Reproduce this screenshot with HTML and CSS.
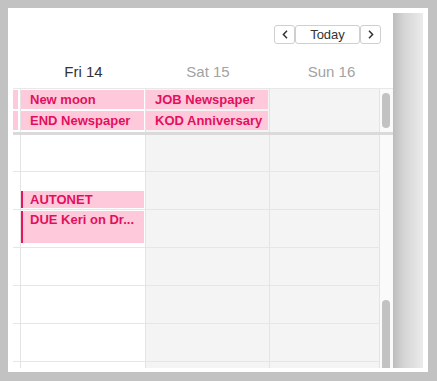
FILE: index.html
```html
<!DOCTYPE html>
<html lang="en">
<head>
  <meta charset="UTF-8" />
  <meta name="viewport" content="width=device-width, initial-scale=1.0"/>
  <title>Week view</title>
  <link rel="stylesheet" href="styles.css">
</head>
<body>

  <div class="window">
    <div class="cal">

      <div class="toolbar">
        <button class="nav-btn" aria-label="Previous">
          <svg width="6" height="9" viewBox="0 0 6 9"><path d="M5 0.8 L1.4 4.5 L5 8.2" fill="none" stroke="#333" stroke-width="1.5"/></svg>
        </button>
        <button class="today-btn">Today</button>
        <button class="nav-btn" aria-label="Next">
          <svg width="6" height="9" viewBox="0 0 6 9"><path d="M1 0.8 L4.6 4.5 L1 8.2" fill="none" stroke="#333" stroke-width="1.5"/></svg>
        </button>
      </div>

      <div class="day-heads">
        <div></div>
        <div class="day-head current">Fri 14</div>
        <div class="day-head">Sat 15</div>
        <div class="day-head">Sun 16</div>
      </div>

      <div class="allday">
        <div class="cell gutter">
          <div class="stub"></div>
          <div class="stub"></div>
        </div>
        <div class="cell">
          <div class="event">New moon</div>
          <div class="event">END Newspaper</div>
        </div>
        <div class="cell weekend">
          <div class="event">JOB Newspaper</div>
          <div class="event">KOD Anniversary</div>
        </div>
        <div class="cell weekend"></div>
        <div class="scroll">
          <div class="thumb thumb-top"></div>
        </div>
      </div>

      <div class="timegrid">
        <div class="col gutter"></div>
        <div class="col">
          <div class="timed" style="top:56px;height:17px">AUTONET</div>
          <div class="timed" style="top:76px;height:32px">DUE Keri on Dr...</div>
        </div>
        <div class="col weekend"></div>
        <div class="col weekend"></div>
        <div class="scroll">
          <div class="thumb thumb-bottom"></div>
        </div>
      </div>

    </div>
    <div class="shade"></div>
  </div>

</body>
</html>
```

FILE: styles.css
```css
body {
  margin: 0;
  padding: 8px 9px 9px 8px;
  background: #c2c2c2;
  font-family: "Liberation Sans", Arial, sans-serif;
}

.window {
  display: flex;
  height: 364px;
  padding: 0 5px 4px 5px;
  box-sizing: border-box;
  background: #fff;
}

.cal {
  flex: 1;
  display: flex;
  flex-direction: column;
  padding-top: 17px;
  overflow: hidden;
}

.shade {
  width: 30px;
  margin-top: 5px;
  background: linear-gradient(to right, #bcbcbc, #d4d4d4 35%, #ebebeb);
}

/* toolbar */
.toolbar {
  display: flex;
  justify-content: flex-end;
  padding-right: 12px;
  height: 19px;
}

.toolbar button {
  height: 19px;
  margin: 0;
  padding: 0;
  background: #fff;
  border: 1px solid #cfcfcf;
  border-radius: 3px;
  color: #333;
  font-family: "Liberation Sans", Arial, sans-serif;
  display: flex;
  align-items: center;
  justify-content: center;
}

.nav-btn {
  width: 21px;
}

.today-btn {
  width: 65px;
  font-size: 13px;
}

/* day headers */
.day-heads {
  display: grid;
  grid-template-columns: 8px 125px 124px 123px;
  height: 44px;
  box-sizing: border-box;
  padding-top: 19px;
}

.day-head {
  text-align: center;
  font-size: 15px;
  line-height: 18px;
  color: #a2a2a2;
}

.day-head.current {
  color: #333;
}

/* all-day strip */
.allday {
  display: grid;
  grid-template-columns: 8px 125px 124px 110px 13px;
  border-top: 1px solid #e8e8e8;
  border-bottom: 3px solid #dadada;
}

.cell {
  display: flex;
  flex-direction: column;
  gap: 2px;
  padding: 1px 1px 2px 0;
  border-right: 1px solid #e4e4e4;
}

.cell.gutter {
  padding-right: 2px;
}

.weekend {
  background: #f4f4f4;
}

.event {
  height: 19px;
  line-height: 19px;
  padding-left: 9px;
  background: #ffc9dc;
  color: #e2105c;
  font-size: 13px;
  font-weight: bold;
  white-space: nowrap;
  overflow: hidden;
}

.stub {
  height: 19px;
  background: #ffc9dc;
}

.scroll {
  position: relative;
  background: #fafafa;
  overflow: hidden;
}

.thumb {
  position: absolute;
  left: 2px;
  width: 8px;
  border-radius: 4px;
  background: #c2c2c2;
}

.thumb-top {
  top: 4px;
  height: 35px;
}

.thumb-bottom {
  top: 165px;
  height: 90px;
}

/* timed grid */
.timegrid {
  flex: 1;
  display: grid;
  grid-template-columns: 8px 125px 124px 110px 13px;
}

.col {
  position: relative;
  border-right: 1px solid #e4e4e4;
  background-image: repeating-linear-gradient(to bottom, transparent 0 36px, #e6e6e6 36px 37px, transparent 37px 38px);
}

.col.weekend {
  background-color: #f4f4f4;
}

.timed {
  position: absolute;
  left: 0;
  right: 1px;
  box-sizing: border-box;
  padding: 1px 0 0 7px;
  border-left: 2px solid #e8155f;
  background: #ffc9dc;
  color: #e2105c;
  font-size: 13px;
  font-weight: bold;
  line-height: 15px;
  white-space: nowrap;
  overflow: hidden;
}
```
